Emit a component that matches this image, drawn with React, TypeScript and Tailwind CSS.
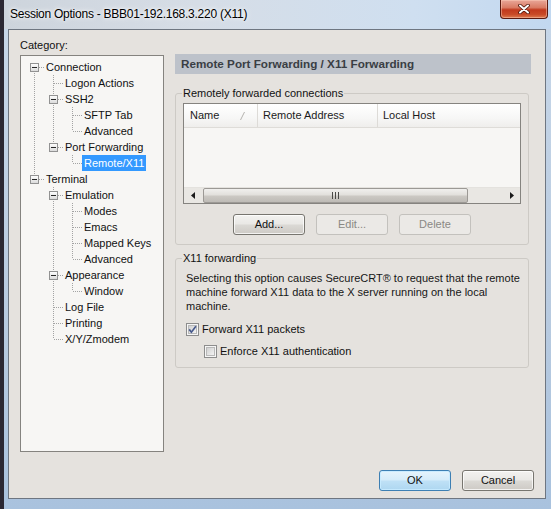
import React from "react";

type TreeNode = { label: string; children?: TreeNode[]; selected?: boolean };

const TREE: TreeNode[] = [
  {
    label: "Connection",
    children: [
      { label: "Logon Actions" },
      { label: "SSH2", children: [{ label: "SFTP Tab" }, { label: "Advanced" }] },
      { label: "Port Forwarding", children: [{ label: "Remote/X11", selected: true }] },
    ],
  },
  {
    label: "Terminal",
    children: [
      {
        label: "Emulation",
        children: [{ label: "Modes" }, { label: "Emacs" }, { label: "Mapped Keys" }, { label: "Advanced" }],
      },
      { label: "Appearance", children: [{ label: "Window" }] },
      { label: "Log File" },
      { label: "Printing" },
      { label: "X/Y/Zmodem" },
    ],
  },
];

type Row = {
  label: string;
  level: number;
  lastFlags: boolean[];
  hasChildren: boolean;
  selected?: boolean;
  firstRoot: boolean;
};

function flatten(nodes: TreeNode[], level: number, parentLast: boolean[], out: Row[]) {
  nodes.forEach((n, i) => {
    const last = i === nodes.length - 1;
    const flags = [...parentLast, last];
    out.push({
      label: n.label,
      level,
      lastFlags: flags,
      hasChildren: !!n.children,
      selected: n.selected,
      firstRoot: level === 0 && i === 0,
    });
    if (n.children) flatten(n.children, level + 1, flags, out);
  });
}

const ROWS: Row[] = [];
flatten(TREE, 0, [], ROWS);

const DOT = "#a3a3a3";

function PassCell({ show }: { show: boolean }) {
  return (
    <svg width="19" height="16" className="block shrink-0">
      {show && <line x1="9.5" y1="0" x2="9.5" y2="16" stroke={DOT} strokeDasharray="1 1" />}
    </svg>
  );
}

function NodeCell({ first, last, expander }: { first: boolean; last: boolean; expander: boolean }) {
  return (
    <svg width="19" height="16" className="block shrink-0">
      <defs>
        <linearGradient id="expFill" x1="0" y1="0" x2="0" y2="1">
          <stop offset="0" stopColor="#ffffff" />
          <stop offset="1" stopColor="#d9d9d9" />
        </linearGradient>
      </defs>
      {!first && <line x1="9.5" y1="0" x2="9.5" y2="8" stroke={DOT} strokeDasharray="1 1" />}
      {!last && <line x1="9.5" y1="8" x2="9.5" y2="16" stroke={DOT} strokeDasharray="1 1" />}
      <line x1={expander ? 14 : 10} y1="8.5" x2="19" y2="8.5" stroke={DOT} strokeDasharray="1 1" />
      {expander && (
        <g>
          <rect x="5.5" y="4.5" width="8" height="8" fill="url(#expFill)" stroke="#929292" />
          <line x1="7" y1="8.5" x2="12" y2="8.5" stroke="#262626" />
        </g>
      )}
    </svg>
  );
}

function TreeRow({ row }: { row: Row }) {
  const cells = [];
  for (let i = 0; i < row.level; i++) {
    cells.push(<PassCell key={i} show={!row.lastFlags[i]} />);
  }
  cells.push(
    <NodeCell
      key="node"
      first={row.firstRoot}
      last={row.lastFlags[row.level]}
      expander={row.hasChildren}
    />
  );
  return (
    <div className="flex h-[16px] items-center">
      {cells}
      <span
        className={
          row.selected
            ? "h-[16px] bg-[#3399ff] px-[2px] leading-[16px] text-white"
            : "h-[16px] px-[2px] leading-[16px] text-[#111]"
        }
      >
        {row.label}
      </span>
    </div>
  );
}

function WinButton({
  label,
  disabled,
  isDefault,
}: {
  label: string;
  disabled?: boolean;
  isDefault?: boolean;
}) {
  let cls =
    "flex h-[21px] w-[72px] items-center justify-center rounded-[3px] border text-[11px] ";
  if (disabled) {
    cls += "border-[#c3c1bd] bg-[#ebe9e6] text-[#8a8884]";
  } else if (isDefault) {
    cls +=
      "border-[#3d7fb3] bg-[linear-gradient(180deg,#e6f4fc_0%,#d5ecfa_48%,#bfe1f6_52%,#aed7f1_100%)] text-[#111] shadow-[inset_0_0_0_1px_rgba(200,235,255,0.9)]";
  } else {
    cls +=
      "border-[#77756f] bg-[linear-gradient(180deg,#f3f2f0_0%,#e9e8e5_48%,#dbd9d5_52%,#cdcac5_100%)] text-[#111] shadow-[inset_0_0_0_1px_rgba(255,255,255,0.75)]";
  }
  return <div className={cls}>{label}</div>;
}

function CheckBox({ checked, id }: { checked?: boolean; id: string }) {
  return (
    <svg width="13" height="13" viewBox="0 0 13 13" className="block shrink-0">
      <defs>
        <linearGradient id={id} x1="0" y1="0" x2="1" y2="1">
          <stop offset="0" stopColor="#cfcfcf" />
          <stop offset="1" stopColor="#f5f5f5" />
        </linearGradient>
      </defs>
      <rect x="0.5" y="0.5" width="12" height="12" fill="#f6f6f6" stroke="#8d8d8d" />
      <rect x="2.5" y="2.5" width="8" height="8" fill={`url(#${id})`} stroke="#b9b9b9" />
      {checked && (
        <path d="M3.2 6.4 L5.4 9.2 L9.9 3.2" fill="none" stroke="#47598c" strokeWidth="1.7" />
      )}
    </svg>
  );
}

function ArrowLeft() {
  return (
    <svg width="4" height="7" viewBox="0 0 4 7" className="block">
      <path d="M4 0 L0 3.5 L4 7 Z" fill="#1a1a1a" />
    </svg>
  );
}

function ArrowRight() {
  return (
    <svg width="4" height="7" viewBox="0 0 4 7" className="block">
      <path d="M0 0 L4 3.5 L0 7 Z" fill="#1a1a1a" />
    </svg>
  );
}

function Grip() {
  return (
    <svg width="7" height="7" viewBox="0 0 7 7" className="block">
      <line x1="0.5" y1="0" x2="0.5" y2="7" stroke="#4a4946" />
      <line x1="3.5" y1="0" x2="3.5" y2="7" stroke="#4a4946" />
      <line x1="6.5" y1="0" x2="6.5" y2="7" stroke="#4a4946" />
    </svg>
  );
}

function CloseGlyph() {
  return (
    <svg width="12" height="10" viewBox="0 0 12 10" className="block">
      <path d="M2 1.5 L10 8.5 M10 1.5 L2 8.5" stroke="#4a1208" strokeWidth="3.6" strokeLinecap="round" />
      <path d="M2 1.5 L10 8.5 M10 1.5 L2 8.5" stroke="#ffffff" strokeWidth="2" strokeLinecap="round" />
    </svg>
  );
}

function ListView() {
  return (
    <div className="flex h-[101px] w-[338px] flex-col border border-[#85837f] bg-[#f7f6f4]">
      <div className="flex h-[24px] shrink-0 border-b border-[#dedcd8] bg-[linear-gradient(180deg,#ffffff_0%,#f7f7f6_60%,#efeeec_100%)] text-[11px] text-[#1b1b1b]">
        <div className="flex w-[74px] items-center border-r border-[#dddbd7] pl-[6px]">
          <span>Name</span>
          <svg width="5" height="8" viewBox="0 0 5 8" className="ml-auto mr-[12px] block">
            <line x1="0.5" y1="8" x2="4.5" y2="0" stroke="#b4b2ae" />
          </svg>
        </div>
        <div className="flex w-[120px] items-center border-r border-[#dddbd7] pl-[5px]">
          Remote Address
        </div>
        <div className="flex flex-1 items-center pl-[5px]">Local Host</div>
      </div>
      <div className="flex-1" />
      <div className="flex h-[16px] shrink-0 items-stretch border-t border-[#e4e2de] bg-[#e9e7e3]">
        <div className="flex w-[17px] items-center justify-center">
          <ArrowLeft />
        </div>
        <div className="ml-[2px] flex w-[265px] items-center justify-center rounded-[2px] border border-[#9c9995] bg-[linear-gradient(180deg,#f0efed_0%,#e2e0dc_45%,#cbc8c3_55%,#bebbb6_100%)]">
          <Grip />
        </div>
        <div className="flex-1" />
        <div className="flex w-[17px] items-center justify-center">
          <ArrowRight />
        </div>
      </div>
    </div>
  );
}

export default function App() {
  return (
    <div className="flex h-[509px] w-[551px] flex-col overflow-hidden border-l-[4px] border-l-[#2b2833] bg-[linear-gradient(180deg,#cfd9e4_0%,#c6d6e8_6%,#b9cbe0_60%,#a9c2de_100%)] font-['Liberation_Sans',Arial,sans-serif]">
      {/* title bar */}
      <div className="flex h-[29px] shrink-0 bg-[linear-gradient(90deg,#cdd4dc_0%,#d6dde6_35%,#cfdff0_75%,#c2d8f0_100%)]">
        <div className="flex h-[28px] items-center pl-[6px] text-[12px] tracking-[-0.25px] text-black [text-shadow:0_0_6px_#ffffff,0_0_3px_#ffffff]">
          Session Options - BBB01-192.168.3.220 (X11)
        </div>
        <div className="ml-auto mr-[3px] flex h-[19px] w-[48px] items-center justify-center rounded-b-[4px] border border-t-0 border-[#5a1a10] bg-[linear-gradient(180deg,#e9a799_0%,#d97b64_42%,#c1391d_55%,#c84a27_80%,#de7a4f_100%)] shadow-[inset_0_0_0_1px_rgba(255,210,190,0.45)]">
          <CloseGlyph />
        </div>
      </div>

      {/* client area */}
      <div className="ml-[4px] flex h-[470px] w-[538px] shrink-0 flex-col border border-[#6e7681] bg-[#e5e2de] text-[11px]">
        <div className="flex pl-[11px] pt-[8px]">
          {/* category tree */}
          <div className="flex w-[144px] flex-col">
            <div className="h-[14px] leading-[14px] text-[#111]">Category:</div>
            <div className="mt-[3px] h-[397px] border border-[#85837f] bg-[#f7f6f4] pl-[4px] pt-[3px]">
              {ROWS.map((r, i) => (
                <TreeRow key={i} row={r} />
              ))}
            </div>
          </div>

          {/* settings page */}
          <div className="ml-[11px] mt-[16px] flex w-[356px] flex-col">
            <div className="flex h-[20px] items-center bg-[#bdc2ca] pl-[6px] text-[11.7px] font-bold text-[#3a3e44]">
              Remote Port Forwarding / X11 Forwarding
            </div>

            <fieldset className="mt-[12px] w-[354px] rounded-[3px] border border-[#cdcac5] pb-[9px] pl-[7px] pt-[3px]">
              <legend className="-ml-[1px] px-[1px] leading-[14px] text-[#111]">
                Remotely forwarded connections
              </legend>
              <ListView />
              <div className="mt-[10px] flex justify-center gap-[11px] pr-[7px]">
                <WinButton label="Add..." />
                <WinButton label="Edit..." disabled />
                <WinButton label="Delete" disabled />
              </div>
            </fieldset>

            <fieldset className="mt-[6px] w-[354px] rounded-[3px] border border-[#cdcac5] pb-[9px] pl-[10px] pt-[6px]">
              <legend className="-ml-[4px] px-[1px] leading-[14px] text-[#111]">X11 forwarding</legend>
              <p className="leading-[14px] text-[#161616]">
                Selecting this option causes SecureCRT® to request that the remote
                <br />
                machine forward X11 data to the X server running on the local
                <br />
                machine.
              </p>
              <div className="mt-[9px] flex h-[14px] items-center gap-[3px] text-[#111]">
                <CheckBox checked id="cbA" />
                <span>Forward X11 packets</span>
              </div>
              <div className="ml-[18px] mt-[8px] flex h-[14px] items-center gap-[3px] text-[#111]">
                <CheckBox id="cbB" />
                <span>Enforce X11 authentication</span>
              </div>
            </fieldset>
          </div>
        </div>

        <div className="mt-[18px] flex justify-end gap-[11px] pr-[11px]">
          <WinButton label="OK" isDefault />
          <WinButton label="Cancel" />
        </div>
      </div>
    </div>
  );
}
